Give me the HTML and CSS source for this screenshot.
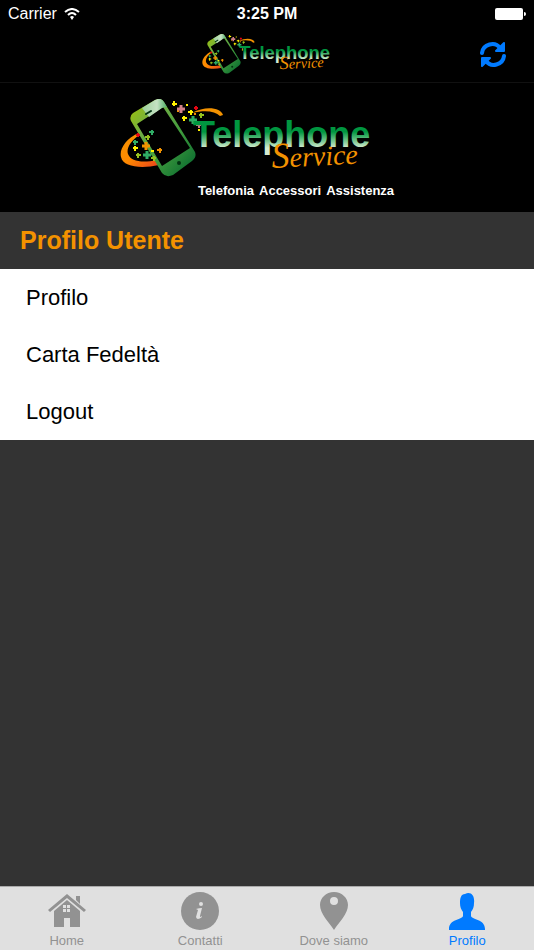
FILE: index.html
```html
<!DOCTYPE html>
<html lang="it">
<head>
  <meta charset="UTF-8" />
  <meta name="viewport" content="width=device-width, initial-scale=1.0"/>
  <title>Telephone Service - Profilo Utente</title>
  <link rel="stylesheet" href="styles.css">
</head>
<body>
  <!-- shared logo, used in the nav bar and in the banner -->
  <svg class="defs" width="0" height="0" aria-hidden="true">
    <defs>
      <linearGradient id="phone" x1="0" y1="0" x2="1" y2="1">
        <stop offset="0" stop-color="#a5c400"/>
        <stop offset="0.3" stop-color="#6fae45"/>
        <stop offset="0.6" stop-color="#3f9a3c"/>
        <stop offset="1" stop-color="#00632e"/>
      </linearGradient>
      <linearGradient id="shine" x1="0" y1="0" x2="1" y2="0">
        <stop offset="0" stop-color="#9bcf9a"/>
        <stop offset="0.6" stop-color="#c5e2c3"/>
        <stop offset="1" stop-color="#4fae68"/>
      </linearGradient>
      <linearGradient id="word" gradientUnits="userSpaceOnUse" x1="0" y1="22" x2="0" y2="49">
        <stop offset="0.4" stop-color="#009640"/>
        <stop offset="1" stop-color="#d5ecd0"/>
      </linearGradient>
      <linearGradient id="swoosh" x1="0" y1="0" x2="1" y2="1">
        <stop offset="0" stop-color="#f39200"/>
        <stop offset="0.5" stop-color="#ff8a00"/>
        <stop offset="1" stop-color="#e8401c"/>
      </linearGradient>
      <symbol id="logo" viewBox="0 0 254 82">
        <path fill="url(#swoosh)" d="M18 34C6 40-1 50 1 58c2 10 20 12 38 8l-2-5c-14 3-26 2-29-6-2-6 3-13 11-19z"/>
        <path fill="#f39200" d="M72 14c14-8 29-5 31 2l-3 1c-5-5-15-6-28-3z"/>
        <path fill="url(#phone)" fill-rule="evenodd" d="M13 14 35 1q6-3 9 2l31 50q2 5-3 9L53 76q-7 3-11-2L11 22q-2-5 2-8zM17 25 42 67 70 49 43 8z"/>
        <path fill="url(#shine)" d="M22 9 35 1q6-3 9 2l3 5q-3 0-5 1L29 18z"/>
        <path stroke="#031" stroke-width="2" stroke-linecap="round" d="m26 15 5-3"/>
        <circle cx="59" cy="64" r="2" fill="#031"/>
        <g stroke-width="2">
          <path stroke="#fff200" d="M52 5h5M54 2v5M62 19h5M64 17v5M68 13h5M71 11v5M13 49h5M15 47v5M66 6h2M31 52h3M78 31h2"/>
          <path stroke="#95c11f" d="M79 16h5M81 14v5M25 38h5M28 36v5M16 56h5M18 54v5M31 59h5M34 57v5"/>
          <path stroke="#2fac66" d="M29 33h5M32 31v5M13 43h5M15 41v5"/>
          <path stroke="#e30613" d="M74 9h4M76 7v4M16 36h4M18 34v4"/>
          <path stroke="#f39200" d="M37 51h5M40 49v5M74 15h2M57 12h2"/>
          <path stroke="#c97b84" d="M76 26h5M79 24v5"/>
        </g>
        <g stroke-width="3">
          <path stroke="#d08088" d="M57 10h8M61 6v8"/>
          <path stroke="#2fac66" d="M69 21h8M73 17v8M23 56h8M27 52v8"/>
          <path stroke="#f39200" d="M22 47h8M26 43v8"/>
        </g>
        <text class="logo-word" x="73" y="48">Telephone</text>
        <text class="logo-script" x="152" y="69" transform="rotate(-3 152 69)"><tspan class="logo-cap">S</tspan>ervice</text>
      </symbol>
    </defs>
  </svg>

  <header class="topbar">
    <div class="status">
      <div class="carrier">
        Carrier
        <svg width="16" height="12" viewBox="0 0 16 12" fill="none" stroke="#fff" stroke-width="2" aria-hidden="true">
          <path d="M1 4q7-6 14 0M4 7q4-4 8 0"/>
          <path d="M6 9q2-2 4 0l-2 3z" fill="#fff" stroke="none"/>
        </svg>
      </div>
      <div class="time">3:25 PM</div>
      <svg class="battery" width="31" height="12" viewBox="0 0 31 12" fill="#fff" aria-hidden="true">
        <rect width="28" height="12" rx="2"/>
        <path d="M29 4q2 0 2 2t-2 2z"/>
      </svg>
    </div>
    <div class="nav">
      <svg class="nav-logo" width="130" height="42" role="img" aria-label="Telephone Service"><use href="#logo"/></svg>
      <button class="refresh" aria-label="Aggiorna">
        <svg width="28" height="28" viewBox="0 0 28 28" fill="none" stroke="#007aff" stroke-width="4" stroke-linecap="round">
          <path d="M3 12C4 3 16 0 21 7M25 15C24 24 12 27 7 20"/>
          <path d="M25 2v8h-8zM3 25v-8h8z" fill="#007aff" stroke-width="2" stroke-linejoin="round"/>
        </svg>
      </button>
    </div>
  </header>

  <div class="banner">
    <svg class="banner-logo" width="254" height="82" role="img" aria-label="Telephone Service"><use href="#logo"/></svg>
    <p class="tagline"><span>Telefonia</span> <span>Accessori</span> <span>Assistenza</span></p>
  </div>

  <main>
    <h1>Profilo Utente</h1>
    <ul class="menu">
      <li><a href="#profilo">Profilo</a></li>
      <li><a href="#carta">Carta Fedeltà</a></li>
      <li><a href="#logout">Logout</a></li>
    </ul>
  </main>

  <nav class="tabs">
    <a href="#home">
      <svg width="38" height="38" viewBox="0 0 38 38" fill="#929292" aria-hidden="true">
        <path d="M19 2 38 18l-2 2L19 6 2 20l-2-2z"/>
        <path d="M28 4h4v8l-4-4z"/>
        <path fill-rule="evenodd" d="M19 8 32 19v16H22v-9h-6v9H6V19zM15 13v3h3v-3zM19 13v3h3v-3zM15 17v3h3v-3zM19 17v3h3v-3z"/>
      </svg>
      Home
    </a>
    <a href="#contatti">
      <svg width="38" height="38" viewBox="0 0 38 38" aria-hidden="true">
        <circle cx="19" cy="19" r="19" fill="#929292"/>
        <circle cx="20" cy="12" r="2" fill="#e0e0e0"/>
        <path fill="#e0e0e0" d="M15 17q3-1 6-1l-2 8q0 2 2 0v1q-5 4-6 0l2-7z"/>
      </svg>
      Contatti
    </a>
    <a href="#dove">
      <svg width="38" height="38" viewBox="0 0 38 38" fill="#929292" aria-hidden="true">
        <path fill-rule="evenodd" d="M19 0C11 0 5 6 5 13c0 9 9 17 14 25 5-8 14-16 14-25C33 6 27 0 19 0zm0 5a4 4 0 1 1 0 8 4 4 0 0 1 0-8z"/>
      </svg>
      Dove siamo
    </a>
    <a class="active" href="#profilo" aria-current="page">
      <svg width="38" height="38" viewBox="0 0 38 38" fill="#007aff" aria-hidden="true">
        <path d="M17 2c6-3 10 2 9 9 0 4-1 6-3 9v4c1 4 14 3 14 13v1H1v-1c0-10 13-9 14-13v-4c-2-3-3-5-3-9 0-5 1-9 5-9z"/>
      </svg>
      Profilo
    </a>
  </nav>
</body>
</html>
```
FILE: styles.css
```css
:root {
  --bg: #333;
  --accent: #f39200;
  --blue: #007aff;
}

* {
  box-sizing: border-box;
}

body {
  margin: 0;
  min-height: 100vh;
  display: flex;
  flex-direction: column;
  font-family: "Liberation Sans", Arial, sans-serif;
  background: var(--bg);
}

.defs {
  position: absolute;
}

.topbar {
  background: #000;
  color: #fff;
  border-bottom: 1px solid #111;
}

.status {
  display: grid;
  grid-template-columns: 1fr auto 1fr;
  align-items: center;
  height: 27px;
  padding: 0 8px;
  font-size: 16px;
}

.carrier {
  display: flex;
  align-items: center;
  gap: 7px;
}

.time    { font-weight: bold; }
.battery { justify-self: end; }

.nav {
  display: grid;
  grid-template-columns: 1fr auto 1fr;
  align-items: center;
  height: 55px;
  padding: 0 27px;
}

.nav-logo {
  display: block;
  grid-column: 2;
}

.refresh {
  justify-self: end;
  padding: 0;
  border: none;
  background: none;
  cursor: pointer;
}

.refresh svg {
  display: block;
}

.logo-word {
  font-size: 36px;
  font-weight: bold;
  fill: url(#word);
}

.logo-script {
  font-family: "Liberation Serif", serif;
  font-style: italic;
  font-size: 28px;
  fill: var(--accent);
}

.logo-cap {
  font-size: 36px;
}

.banner {
  display: flex;
  flex-direction: column;
  align-items: center;
  padding: 16px 0 13px;
  background: #000;
}

.banner-logo {
  display: block;
  margin-right: 40px;
}

.tagline {
  display: flex;
  gap: 5px;
  margin: 2px 0 0 58px;
  font-size: 13px;
  line-height: 16px;
  font-weight: bold;
  color: #fff;
}

main {
  flex: 1;
}

h1 {
  margin: 0;
  padding: 0 20px;
  font-size: 25px;
  line-height: 57px;
  color: var(--accent);
}

.menu {
  margin: 0;
  padding: 0;
  list-style: none;
  background: #fff;
}

.menu a {
  display: block;
  padding: 0 26px;
  font-size: 22px;
  line-height: 57px;
  color: #000;
  text-decoration: none;
}

.tabs {
  display: grid;
  grid-template-columns: repeat(4, 1fr);
  border-top: 1px solid #aaa;
  background: #e0e0e0;
}

.tabs a {
  display: flex;
  flex-direction: column;
  align-items: center;
  gap: 3px;
  padding: 5px 0 1px;
  font-size: 13px;
  line-height: 16px;
  color: #929292;
  text-decoration: none;
}

.tabs .active {
  color: var(--blue);
}
```
